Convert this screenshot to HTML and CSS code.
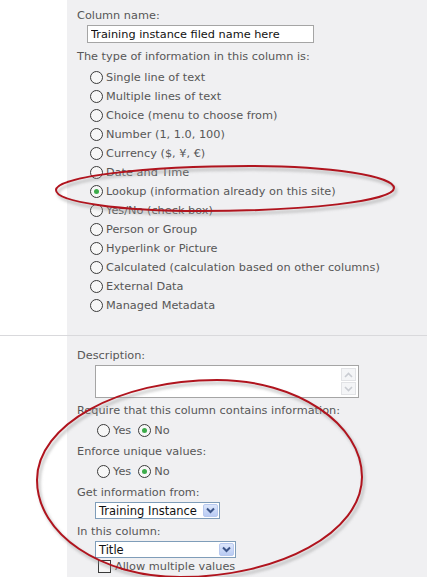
FILE: index.html
```html
<!DOCTYPE html>
<html>
<head>
  <meta charset="utf-8" />
  <title>Column settings</title>
  <link rel="stylesheet" href="styles.css">
</head>
<body>
  <div class="page">
    <div class="section first">
      <div class="gutter"></div>
      <div class="panel">
        <div class="label">Column name:</div>
        <input type="text" class="name-box" value="Training instance filed name here" />
        <div class="label type-label">The type of information in this column is:</div>
        <div class="options">
          <label class="opt"><span class="radio"></span>Single line of text</label>
          <label class="opt"><span class="radio"></span>Multiple lines of text</label>
          <label class="opt"><span class="radio"></span>Choice (menu to choose from)</label>
          <label class="opt"><span class="radio"></span>Number (1, 1.0, 100)</label>
          <label class="opt"><span class="radio"></span>Currency ($, ¥, €)</label>
          <label class="opt"><span class="radio"></span>Date and Time</label>
          <label class="opt"><span class="radio on"></span>Lookup (information already on this site)</label>
          <label class="opt"><span class="radio"></span>Yes/No (check box)</label>
          <label class="opt"><span class="radio"></span>Person or Group</label>
          <label class="opt"><span class="radio"></span>Hyperlink or Picture</label>
          <label class="opt"><span class="radio"></span>Calculated (calculation based on other columns)</label>
          <label class="opt"><span class="radio"></span>External Data</label>
          <label class="opt"><span class="radio"></span>Managed Metadata</label>
        </div>
      </div>
    </div>

    <div class="section second">
      <div class="gutter"></div>
      <div class="panel">
        <div class="label desc-label">Description:</div>
        <div class="memo">
          <div class="memo-text"></div>
          <div class="scroll">
            <span class="arrow"><svg width="9" height="6" viewBox="0 0 9 6"><path d="M1 5 L4.5 1.5 L8 5" fill="none" stroke="#c9ccd2" stroke-width="1.6"/></svg></span>
            <span class="arrow"><svg width="9" height="6" viewBox="0 0 9 6"><path d="M1 1 L4.5 4.5 L8 1" fill="none" stroke="#c9ccd2" stroke-width="1.6"/></svg></span>
          </div>
        </div>

        <div class="label gap">Require that this column contains information:</div>
        <div class="yesno">
          <label class="opt"><span class="radio"></span>Yes</label>
          <label class="opt"><span class="radio on"></span>No</label>
        </div>

        <div class="label gap">Enforce unique values:</div>
        <div class="yesno">
          <label class="opt"><span class="radio"></span>Yes</label>
          <label class="opt"><span class="radio on"></span>No</label>
        </div>

        <div class="label gap">Get information from:</div>
        <div class="select list-select">
          <span class="select-text">Training Instance</span>
          <span class="drop"><svg width="9" height="7" viewBox="0 0 9 7"><path d="M1 1.5 L4.5 5 L8 1.5" fill="none" stroke="#3b5488" stroke-width="2"/></svg></span>
        </div>

        <div class="label gap">In this column:</div>
        <div class="select col-select">
          <span class="select-text">Title</span>
          <span class="drop"><svg width="9" height="7" viewBox="0 0 9 7"><path d="M1 1.5 L4.5 5 L8 1.5" fill="none" stroke="#3b5488" stroke-width="2"/></svg></span>
        </div>
        <label class="check-row"><span class="check"></span>Allow multiple values</label>
      </div>
    </div>

    <svg class="marks" width="427" height="577" viewBox="0 0 427 577">
      <defs>
        <filter id="soft" x="-10%" y="-20%" width="120%" height="140%">
          <feGaussianBlur stdDeviation="1.6" />
        </filter>
      </defs>
      <g fill="none">
        <g transform="translate(2,3)" stroke="#9a9a9a" stroke-width="2.5" opacity="0.6" filter="url(#soft)">
          <path d="M56 190 C56 177 143 166 250 166 C330 166 394 176 394 188 C394 201 307 211 200 211 C120 211 56 202 56 190 Z" />
          <path d="M37 480 C37 425 118 380 217 380 C297 380 362 424 362 477 C362 532 280 577 180 577 C101 577 37 534 37 480 Z" />
        </g>
        <g stroke="#b0141e" stroke-width="2">
          <path d="M56 190 C56 177 143 166 250 166 C330 166 394 176 394 188 C394 201 307 211 200 211 C120 211 56 202 56 190 Z" />
          <path d="M37 480 C37 425 118 380 217 380 C297 380 362 424 362 477 C362 532 280 577 180 577 C101 577 37 534 37 480 Z" />
        </g>
      </g>
    </svg>
  </div>
</body>
</html>
```

FILE: styles.css
```css
body {
  margin: 0;
  background-color: #ffffff;
  font-family: "DejaVu Sans", Verdana, sans-serif;
  font-size: 11.3px;
  color: #575757;
}
.page {
  position: relative;
  width: 427px;
  height: 577px;
  overflow: hidden;
}
.section {
  display: flex;
}
.first {
  height: 335px;
}
.second {
  border-top: 1px solid #d9d9dc;
  height: 241px;
}
.gutter {
  width: 67px;
  flex: none;
}
.panel {
  flex: 1;
  background-color: #f0f0f2;
  padding-left: 10px;
}
.label {
  line-height: 16px;
}
.first .label:first-child {
  margin-top: 8px;
}
.name-box {
  display: block;
  box-sizing: border-box;
  width: 227px;
  height: 18px;
  margin: 1px 0 0 10px;
  padding: 0 3px;
  border: 1px solid #a5a5a5;
  font-family: "DejaVu Sans", Verdana, sans-serif;
  font-size: 11.3px;
  color: #111111;
  background: #ffffff;
}
.type-label {
  margin-top: 6px;
}
.options {
  margin-top: 3px;
  padding-left: 13px;
}
.opt {
  display: flex;
  align-items: center;
  height: 19px;
  white-space: nowrap;
}
.radio {
  box-sizing: border-box;
  width: 13px;
  height: 13px;
  margin-right: 3px;
  border: 1px solid #3a3a3a;
  border-radius: 50%;
  background: #f7f7f7;
  display: flex;
  align-items: center;
  justify-content: center;
}
.radio.on::after {
  content: "";
  width: 5px;
  height: 5px;
  border-radius: 50%;
  background: #3cab4a;
}
.desc-label {
  margin-top: 12px;
}
.memo {
  display: flex;
  box-sizing: border-box;
  width: 264px;
  height: 33px;
  margin: 1px 0 0 18px;
  border: 1px solid #a5a5a5;
  background: #ffffff;
}
.memo-text {
  flex: 1;
}
.scroll {
  width: 15px;
  display: flex;
  flex-direction: column;
  justify-content: space-between;
  padding: 2px 2px 2px 0;
}
.arrow {
  box-sizing: border-box;
  height: 13px;
  border: 1px solid #e2e3e6;
  background: #f4f5f7;
  display: flex;
  align-items: center;
  justify-content: center;
}
.gap {
  margin-top: 5px;
}
.yesno {
  display: flex;
  gap: 7px;
  padding-left: 20px;
  margin-top: 2px;
}
.yesno .opt {
  height: 18px;
}
.select {
  display: flex;
  align-items: center;
  box-sizing: border-box;
  height: 17px;
  margin: 1px 0 0 18px;
  border: 1px solid #7f9db9;
  background: #ffffff;
  color: #111111;
  font-size: 11.5px;
}
.list-select {
  width: 125px;
}
.col-select {
  width: 141px;
}
.select-text {
  flex: 1;
  padding-left: 3px;
  white-space: nowrap;
}
.drop {
  box-sizing: border-box;
  width: 15px;
  height: 13px;
  margin-right: 1px;
  border: 1px solid #b8c9ef;
  border-radius: 2px;
  background: linear-gradient(#dce6fb, #b9cbf3);
  display: flex;
  align-items: center;
  justify-content: center;
}
.check-row {
  display: flex;
  align-items: center;
  height: 17px;
  padding-left: 21px;
}
.check {
  box-sizing: border-box;
  width: 13px;
  height: 13px;
  margin-right: 4px;
  border: 1px solid #3a3a3a;
  background: #f5f5f5;
}
.marks {
  position: absolute;
  left: 0;
  top: 0;
  pointer-events: none;
}
```
